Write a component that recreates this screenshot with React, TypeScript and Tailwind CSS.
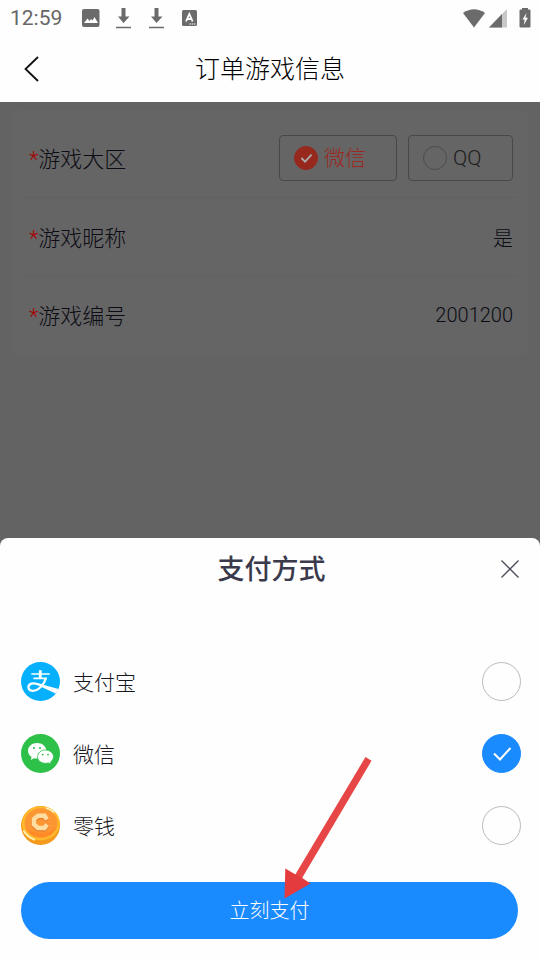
import { useState } from "react";
import type { ReactNode } from "react";

function StatusBar() {
  return (
    <div className="flex h-9 items-center justify-between pr-[9px] pl-[10px] text-[#666]">
      <div className="flex items-center">
        <span className="w-[72px] text-[21px] leading-6">12:59</span>
        <svg width="18" height="18" viewBox="0 0 18 18" aria-hidden="true">
          <rect width="17.500" height="18" rx="2" fill="#6b6b6b" />
          <path d="M2 14l3.500-4.500 2 2.500L9 10l1.500 1.500L12.500 8 16 14z" fill="#fff" />
        </svg>
        <DownloadIcon />
        <DownloadIcon />
        <svg className="ml-4" width="16" height="16" viewBox="0 0 16 16" aria-hidden="true">
          <rect width="15" height="16" rx="1.500" fill="#6b6b6b" />
          <path d="M4 11.500 7.300 4l3.300 7.500M5.500 9h4" fill="none" stroke="#fff" strokeWidth="1.800" />
          <path d="M7.500 14h6" stroke="#fff" strokeDasharray="1.500 .7" />
        </svg>
      </div>
      <div className="flex items-center">
        <svg width="22" height="19" viewBox="0 0 22 19" aria-hidden="true">
          <path d="M0 4Q11-3.500 22 4L11 18.500z" fill="#6b6b6b" />
        </svg>
        <svg className="ml-1" width="19" height="19" viewBox="0 0 19 19" aria-hidden="true">
          <path d="M18 0v18.500H0z" fill="#c8c8c8" />
          <path d="M13 5v13.500H0z" fill="#6b6b6b" />
        </svg>
        <svg className="ml-[11px]" width="12" height="20" viewBox="0 0 12 20" aria-hidden="true">
          <path d="M3 0h6v1.500h1.500q1 0 1 1v16q0 1-1 1h-9q-1 0-1-1v-16q0-1 1-1H3z" fill="#6b6b6b" />
          <path d="M7.500 5 3.500 11.500h2.200L4.800 17 9 9.800H6.500z" fill="#fff" />
        </svg>
      </div>
    </div>
  );
}

function DownloadIcon() {
  return (
    <svg className="ml-4 first-of-type:ml-4" width="17" height="21" viewBox="0 0 17 21" aria-hidden="true">
      <path d="M5.500 0h4v8.500H13.500L7.500 15 2 8.500h3.500z" fill="#6b6b6b" />
      <path d="M0 19.500h15" stroke="#6b6b6b" strokeWidth="1.500" />
    </svg>
  );
}

function TitleBar() {
  return (
    <div className="grid h-[66px] grid-cols-[64px_1fr_64px] items-center">
      <button type="button" aria-label="返回" className="flex h-full items-center pl-6">
        <svg width="16" height="26" viewBox="0 0 16 26" fill="none" stroke="#111" strokeWidth="1.800" aria-hidden="true">
          <path d="M14 1 1.500 13 14 25" />
        </svg>
      </button>
      <h1 className="pt-[2px] text-center text-[25px] leading-8 font-light text-black">订单游戏信息</h1>
    </div>
  );
}

function Check({ className, strokeWidth }: { className: string; strokeWidth: number }) {
  return (
    <svg className={className} viewBox="0 0 39 39" fill="none" aria-hidden="true">
      <path d="M12 19.500 18 25.500 28.500 14" strokeWidth={strokeWidth} stroke="currentColor" />
    </svg>
  );
}

function FieldLabel({ htmlFor, children }: { htmlFor?: string; children: ReactNode }) {
  return (
    <label htmlFor={htmlFor} className="pt-1 text-[22px] leading-8 font-light whitespace-nowrap text-[#0c0c14]">
      <span className="text-[#a80000]">*</span>
      {children}
    </label>
  );
}

function ZoneOption({ label, checked, onSelect, className }: { label: string; checked: boolean; onSelect: () => void; className: string }) {
  return (
    <label className={`flex h-[46px] items-center gap-[6px] rounded-[4px] border border-[#484848] pl-[14px] ${className}`}>
      <span className="grid">
        <input
          type="radio"
          name="zone"
          checked={checked}
          onChange={onSelect}
          className="col-start-1 row-start-1 size-6 appearance-none rounded-full border border-[#4c4c4c] checked:border-[#96281e] checked:bg-[#96281e]"
        />
        {checked && <Check strokeWidth={3} className="pointer-events-none col-start-1 row-start-1 size-6 text-[#aaa]" />}
      </span>
      <span className={`text-[21px] leading-7 font-light ${checked ? "text-[#9c2820]" : "text-[#1c1c1c]"}`}>{label}</span>
    </label>
  );
}

function OrderInfo() {
  const [zone, setZone] = useState("微信");
  const valueClass = "w-40 bg-transparent text-right text-[20px] leading-7 font-light text-[#0c0c14] outline-none";
  return (
    <section className="mx-3 mt-2 rounded-lg bg-[#656565] px-[10px] pt-2 pb-[3px]">
      <div className="flex h-20 items-center justify-between border-b border-[#616161] pr-[5px] pl-[7px]">
        <FieldLabel>游戏大区</FieldLabel>
        <div className="flex gap-[11px]">
          <ZoneOption label="微信" checked={zone === "微信"} onSelect={() => setZone("微信")} className="w-[118px]" />
          <ZoneOption label="QQ" checked={zone === "QQ"} onSelect={() => setZone("QQ")} className="w-[105px]" />
        </div>
      </div>
      <div className="flex h-[79px] items-center justify-between border-b border-[#616161] pr-[5px] pl-[7px]">
        <FieldLabel htmlFor="nickname">游戏昵称</FieldLabel>
        <input id="nickname" defaultValue="是" className={`pt-1 ${valueClass}`} />
      </div>
      <div className="flex h-[76px] items-center justify-between pr-[5px] pl-[7px]">
        <FieldLabel htmlFor="number">游戏编号</FieldLabel>
        <input id="number" defaultValue="2001200" className={valueClass} />
      </div>
    </section>
  );
}

function AlipayIcon() {
  return (
    <svg className="size-[39px]" viewBox="0 0 39 39" fill="none" aria-hidden="true">
      <circle cx="19.500" cy="19.500" r="19.500" fill="#06b0fd" />
      <path d="M10.300 12h18.400M12.500 16.400h13.500" stroke="#fff" strokeWidth="1.700" />
      <path d="M19.300 8.200v8" stroke="#fff" strokeWidth="2.800" />
      <path d="M25 16C23.500 21.500 18 29 11.500 28.800 6.500 28.600 6 23 10.500 21.600 14.500 20.500 20 23 25 25.200" stroke="#fff" strokeWidth="2.200" />
      <path d="M21 22.500 37.600 27Q36.500 30 34.700 31.600L20 24.700z" fill="#fff" />
    </svg>
  );
}

function WechatIcon() {
  return (
    <svg className="size-[39px]" viewBox="0 0 39 39" aria-hidden="true">
      <circle cx="19.500" cy="19.500" r="19.500" fill="#2dc14a" />
      <path d="M16 9c5.200 0 9.300 3.500 9.300 7.800S21.200 24.600 16 24.600q-1.500 0-2.900-.4L9.800 26l.8-3C8.300 21.500 7 19.300 7 16.800 7 12.500 11 9 16 9z" fill="#fff" />
      <path d="M24.500 16c4.500 0 8 3 8 6.700 0 2.200-1.200 4-3 5.200l.6 2.300-2.700-1.300q-1.400.4-2.900.4c-4.500 0-8-2.900-8-6.600s3.500-6.700 8-6.700z" fill="#fff" stroke="#2dc14a" strokeWidth=".8" />
      <g fill="#2dc14a">
        <circle cx="13" cy="14" r="1.100" />
        <circle cx="19" cy="14" r="1.100" />
        <circle cx="21.800" cy="20.600" r=".9" />
        <circle cx="27" cy="20.600" r=".9" />
      </g>
    </svg>
  );
}

function CoinIcon() {
  return (
    <svg className="size-[39px]" viewBox="0 0 39 39" fill="none" aria-hidden="true">
      <circle cx="19.500" cy="19.500" r="19.500" fill="#f59a1c" />
      <ellipse cx="19.800" cy="17.200" rx="19" ry="17" fill="#ffb92c" />
      <ellipse cx="20" cy="17" rx="16.500" ry="14.800" fill="#fc9632" />
      <path d="M4 20Q9 31.500 21 31.500 33 30 36 19 31 27 20 27 9 27 4 20z" fill="#ff8a26" />
      <path d="M26 13.500 23.500 9.800h-6.500L13 13v5.500l4 3.500h6.500l2.500-3.500" stroke="#e87a28" strokeWidth="5" transform="translate(0 1)" />
      <path d="M26 13.500 23.500 9.800h-6.500L13 13v5.500l4 3.500h6.500l2.500-3.500" stroke="#ffdda0" strokeWidth="4.500" />
      <path d="M2.500 24.500Q6 31 14 34M25 2q5 1.500 8 4.500" stroke="#fff0b4" strokeWidth="1.800" />
    </svg>
  );
}

const methods = [
  { id: "alipay", label: "支付宝", icon: <AlipayIcon /> },
  { id: "wechat", label: "微信", icon: <WechatIcon /> },
  { id: "change", label: "零钱", icon: <CoinIcon /> },
];

function PaymentSheet() {
  const [method, setMethod] = useState("wechat");
  return (
    <section className="relative rounded-t-lg bg-[#fefefe] pb-[21px]">
      <div className="grid h-[62px] grid-cols-[64px_1fr_61px] items-center">
        <h2 className="col-start-2 pt-[2px] text-center text-[27px] leading-9 font-medium text-[#3a3a4c]">支付方式</h2>
        <button type="button" aria-label="关闭" className="flex h-full items-center justify-center">
          <svg width="18" height="18" viewBox="0 0 18 18" stroke="#4a4a58" strokeWidth="1.300" aria-hidden="true">
            <path d="M.5.5l17 17M17.500.5l-17 17" />
          </svg>
        </button>
      </div>
      <div className="mt-[45px] pr-[19px] pl-[21px]">
        {methods.map((item) => (
          <label key={item.id} className="flex h-[72px] items-center">
            {item.icon}
            <span className="ml-[13px] flex-1 pt-1 text-[21px] leading-8 font-light text-[#16161c]">{item.label}</span>
            <span className="grid">
              <input
                type="radio"
                name="method"
                checked={method === item.id}
                onChange={() => setMethod(item.id)}
                className="col-start-1 row-start-1 size-[39px] appearance-none rounded-full border border-[#bbb] checked:border-[#1a8aff] checked:bg-[#1a8aff]"
              />
              {method === item.id && <Check strokeWidth={2} className="pointer-events-none col-start-1 row-start-1 size-[39px] text-white" />}
            </span>
          </label>
        ))}
      </div>
      <div className="mt-[21px] pr-[22px] pl-[21px]">
        <button type="button" className="h-[57px] w-full rounded-full bg-[#1a8aff] text-[20px] leading-7 font-light text-white">
          立刻支付
        </button>
      </div>
      <svg className="pointer-events-none absolute right-[168px] bottom-[61px]" width="88" height="143" viewBox="0 0 88 143" aria-hidden="true">
        <path d="M81.500 1 87.500 4.800 17.500 123 11 119z" fill="#e64645" />
        <path d="M1.300 112.500 11.500 118.500 17.500 121.500 26.500 127.500.5 142.500z" fill="#e43c3e" />
      </svg>
    </section>
  );
}

export default function App() {
  return (
    <main className="flex min-h-screen flex-col bg-[#636363] font-[Roboto,'Noto_Sans_CJK_SC',sans-serif]">
      <header className="bg-[#fefefe]">
        <StatusBar />
        <TitleBar />
      </header>
      <div className="flex-1">
        <OrderInfo />
      </div>
      <PaymentSheet />
    </main>
  );
}
